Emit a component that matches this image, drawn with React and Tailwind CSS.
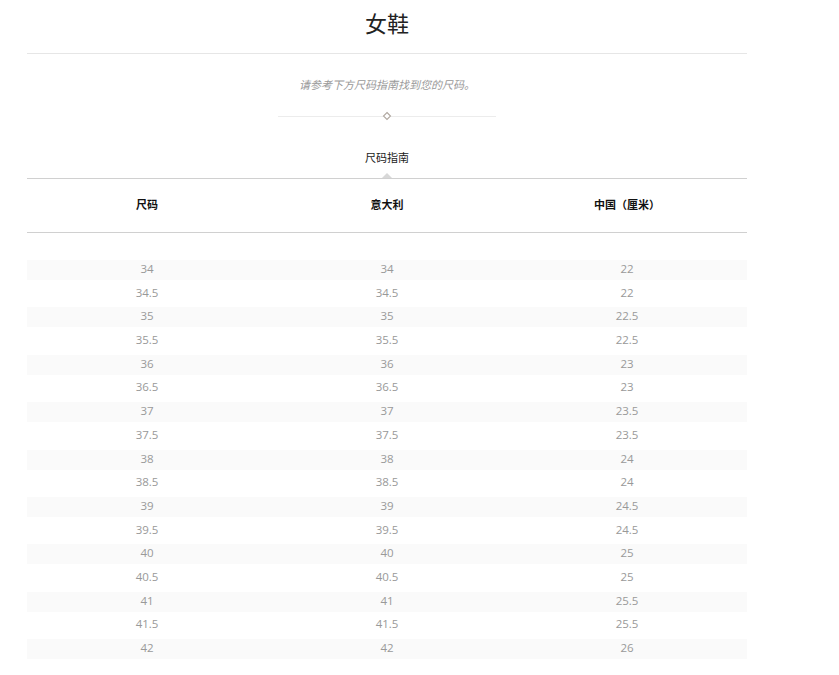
import React from "react";

const rows = [
  ["34", "34", "22"],
  ["34.5", "34.5", "22"],
  ["35", "35", "22.5"],
  ["35.5", "35.5", "22.5"],
  ["36", "36", "23"],
  ["36.5", "36.5", "23"],
  ["37", "37", "23.5"],
  ["37.5", "37.5", "23.5"],
  ["38", "38", "24"],
  ["38.5", "38.5", "24"],
  ["39", "39", "24.5"],
  ["39.5", "39.5", "24.5"],
  ["40", "40", "25"],
  ["40.5", "40.5", "25"],
  ["41", "41", "25.5"],
  ["41.5", "41.5", "25.5"],
  ["42", "42", "26"],
];

const cjk = "font-['Noto_Sans_CJK_SC','Noto_Sans',sans-serif]";

export default function App() {
  return (
    <div className="w-full min-h-[675px] bg-white">
      <div className="ml-[27px] w-[720px]">
        <div className={`h-[54px] border-b border-[#e6e6e6] pt-[8px] text-center text-[22px] leading-[28px] text-[#222] ${cjk}`}>
          女鞋
        </div>
        <div className={`mt-[21px] text-center text-[11px] leading-[18px] italic text-[#999] ${cjk}`}>
          请参考下方尺码指南找到您的尺码。
        </div>
        <div className="mt-[18px] flex justify-center">
          <div className="relative flex h-[10px] w-[218px] items-center">
            <div className="h-px w-full bg-[#ececec]" />
            <svg
              className="absolute left-1/2 top-1/2 -translate-x-1/2 -translate-y-1/2"
              width="10"
              height="10"
              viewBox="0 0 10 10"
            >
              <polygon points="5,1.5 8.5,5 5,8.5 1.5,5" fill="white" stroke="#b0a8a0" strokeWidth="1.1" />
            </svg>
          </div>
        </div>
        <div className={`mt-[27px] pb-[12px] text-center text-[11px] leading-[18px] text-[#222] ${cjk}`}>
          尺码指南
        </div>
        <div className="relative border-t border-[#d0d0d0]">
          <div className="absolute left-1/2 top-[-6px] h-0 w-0 -translate-x-1/2 border-x-[5px] border-b-[5px] border-x-transparent border-b-[#d8d8d8]" />
          <div className={`grid h-[54px] grid-cols-3 border-b border-[#d0d0d0] pt-[16px] text-center text-[11px] font-bold leading-[18px] text-[#111] ${cjk}`}>
            <div>尺码</div>
            <div>意大利</div>
            <div>中国（厘米）</div>
          </div>
        </div>
        <div className="mt-[27px] flex flex-col gap-[3.7px] font-['Open_Sans',sans-serif] text-[11.5px] leading-[16px] text-[#999]">
          {rows.map((r, i) => (
            <div
              key={i}
              className={`grid h-[20px] grid-cols-3 items-center pb-[2px] text-center ${i % 2 === 0 ? "bg-[#fafafa]" : "bg-white"}`}
            >
              <div>{r[0]}</div>
              <div>{r[1]}</div>
              <div>{r[2]}</div>
            </div>
          ))}
        </div>
      </div>
    </div>
  );
}
